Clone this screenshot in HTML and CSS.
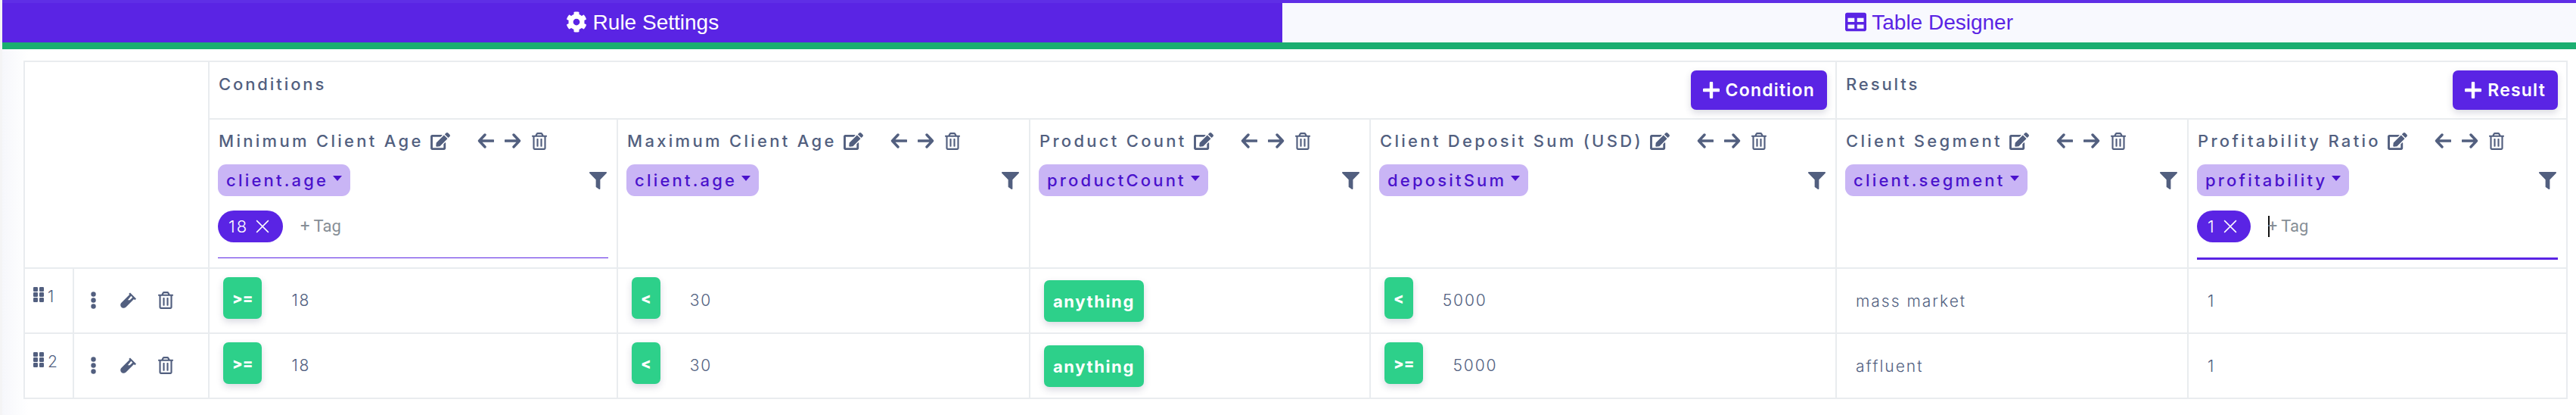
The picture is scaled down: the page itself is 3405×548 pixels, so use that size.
FILE: index.html
```html
<!DOCTYPE html>
<html lang="en">
<head>
  <meta charset="UTF-8" />
  <title>Rule Designer</title>
  <link rel="stylesheet" href="styles.css">
</head>
<body>

<svg class="icon-defs" aria-hidden="true">
  <symbol id="i-cog" viewBox="0 0 512 512"><path d="M487.4 315.7l-42.6-24.6c4.3-23.2 4.3-47 0-70.2l42.6-24.6c4.9-2.8 7.1-8.6 5.5-14-11.1-35.6-30-67.8-54.7-94.6-3.8-4.1-10-5.1-14.8-2.3L380.8 110c-17.9-15.4-38.5-27.3-60.8-35.1V25.8c0-5.6-3.9-10.5-9.4-11.7-36.7-8.2-74.3-7.8-109.2 0-5.5 1.2-9.4 6.1-9.4 11.7V75c-22.2 7.9-42.8 19.8-60.8 35.1L88.7 85.5c-4.9-2.8-11-1.9-14.8 2.3-24.7 26.7-43.6 58.9-54.7 94.6-1.7 5.4.6 11.2 5.5 14L67.3 221c-4.3 23.2-4.3 47 0 70.2l-42.6 24.6c-4.9 2.8-7.1 8.6-5.5 14 11.1 35.6 30 67.8 54.7 94.6 3.8 4.1 10 5.1 14.8 2.3l42.6-24.6c17.9 15.4 38.5 27.3 60.8 35.1v49.2c0 5.6 3.9 10.5 9.4 11.7 36.7 8.2 74.3 7.8 109.2 0 5.5-1.2 9.4-6.1 9.4-11.7v-49.2c22.2-7.9 42.8-19.8 60.8-35.1l42.6 24.6c4.9 2.8 11 1.9 14.8-2.3 24.7-26.7 43.6-58.9 54.7-94.6 1.5-5.5-.7-11.3-5.6-14.1zM256 336c-44.1 0-80-35.9-80-80s35.9-80 80-80 80 35.9 80 80-35.9 80-80 80z"/></symbol>
  <symbol id="i-table" viewBox="0 0 512 512"><path d="M464 32H48C21.49 32 0 53.49 0 80v352c0 26.51 21.49 48 48 48h416c26.51 0 48-21.49 48-48V80c0-26.51-21.49-48-48-48zM224 416H64v-96h160v96zm0-160H64v-96h160v96zm224 160H288v-96h160v96zm0-160H288v-96h160v96z"/></symbol>
  <symbol id="i-edit" viewBox="0 0 576 512"><path d="M402.6 83.2l90.2 90.2c3.8 3.8 3.8 10 0 13.8L274.4 405.6l-92.8 10.3c-12.4 1.4-22.9-9.1-21.5-21.5l10.3-92.8L388.8 83.2c3.8-3.8 10-3.8 13.8 0zm162-22.9l-48.8-48.8c-15.2-15.2-39.9-15.2-55.2 0l-35.4 35.4c-3.8 3.8-3.8 10 0 13.8l90.2 90.2c3.8 3.8 10 3.8 13.8 0l35.4-35.4c15.2-15.3 15.2-40 0-55.2zM384 346.2V448H64V128h229.8c3.2 0 6.2-1.3 8.5-3.5l40-40c7.6-7.6 2.2-20.5-8.5-20.5H48C21.5 64 0 85.5 0 112v352c0 26.5 21.5 48 48 48h352c26.5 0 48-21.5 48-48V306.2c0-10.7-12.9-16-20.5-8.5l-40 40c-2.2 2.3-3.5 5.3-3.5 8.5z"/></symbol>
  <symbol id="i-trash" viewBox="0 0 448 512"><path d="M268 416h24a12 12 0 0 0 12-12V188a12 12 0 0 0-12-12h-24a12 12 0 0 0-12 12v216a12 12 0 0 0 12 12zM432 80h-82.41l-34-56.7A48 48 0 0 0 274.41 0H173.59a48 48 0 0 0-41.16 23.3L98.41 80H16A16 16 0 0 0 0 96v16a16 16 0 0 0 16 16h16v336a48 48 0 0 0 48 48h288a48 48 0 0 0 48-48V128h16a16 16 0 0 0 16-16V96a16 16 0 0 0-16-16zM171.84 50.91A6 6 0 0 1 177 48h94a6 6 0 0 1 5.15 2.91L293.61 80H154.39zM368 464H80V128h288zm-212-48h24a12 12 0 0 0 12-12V188a12 12 0 0 0-12-12h-24a12 12 0 0 0-12 12v216a12 12 0 0 0 12 12z"/></symbol>
  <symbol id="i-filter" viewBox="0 0 512 512"><path d="M487.976 0H24.028C2.71 0-8.047 25.866 7.058 40.971L192 225.941V432c0 7.831 3.821 15.17 10.237 19.662l80 55.98C298.02 518.69 320 507.493 320 487.98V225.941l184.947-184.97C520.021 25.896 509.338 0 487.976 0z"/></symbol>
  <symbol id="i-left" viewBox="0 0 22 20"><path d="M10 2 2.500 10 10 18M3 10h18" fill="none" stroke="currentColor" stroke-width="3.400" stroke-linecap="round" stroke-linejoin="round"/></symbol>
  <symbol id="i-right" viewBox="0 0 22 20"><path d="M12 2 19.500 10 12 18M1 10h18" fill="none" stroke="currentColor" stroke-width="3.400" stroke-linecap="round" stroke-linejoin="round"/></symbol>
  <symbol id="i-plus" viewBox="0 0 20 20"><path d="M10 1.500v17M1.500 10h17" fill="none" stroke="currentColor" stroke-width="4" stroke-linecap="round"/></symbol>
  <symbol id="i-x" viewBox="0 0 16 16"><path d="M1 1l14 14M15 1 1 15" fill="none" stroke="currentColor" stroke-width="1.300"/></symbol>
  <symbol id="i-grip" viewBox="0 0 14 20"><rect width="6" height="6" rx="1.200"/><rect x="8" width="6" height="6" rx="1.200"/><rect y="7" width="6" height="6" rx="1.200"/><rect x="8" y="7" width="6" height="6" rx="1.200"/><rect y="14" width="6" height="6" rx="1.200"/><rect x="8" y="14" width="6" height="6" rx="1.200"/></symbol>
  <symbol id="i-dots" viewBox="0 0 7 23"><circle cx="3.500" cy="3.500" r="3.200"/><circle cx="3.500" cy="11.500" r="3.200"/><circle cx="3.500" cy="19.500" r="3.200"/></symbol>
  <symbol id="i-vial" viewBox="0 0 22 22"><path d="M13 1.500 21 9.500 19.300 11.200 18 10 7.500 20.500C5.500 22.300 2.800 22 1.300 20.500-.2 19 -.2 16.400 1.700 14.500L12.200 4 11.200 3Z"/><path d="M14.300 5.800 16.200 7.700 12.600 11.300 9.900 11.300Z" fill="#fff"/></symbol>
</svg>

<nav class="tabs">
  <button class="tab active"><svg class="tab-icon"><use href="#i-cog"/></svg> Rule Settings</button>
  <button class="tab"><svg class="tab-icon"><use href="#i-table"/></svg> Table Designer</button>
</nav>

<div class="designer">
  <table class="rule-table">
    <colgroup>
      <col class="col-num"><col class="col-actions">
      <col class="col-a"><col class="col-b"><col class="col-c"><col class="col-d"><col class="col-e"><col class="col-f">
    </colgroup>
    <thead>
      <tr class="group-row">
        <th colspan="2" rowspan="2"></th>
        <th colspan="4">
          <div class="group-head">
            <span class="group-title">Conditions</span>
            <button class="add-btn"><svg><use href="#i-plus"/></svg>Condition</button>
          </div>
        </th>
        <th colspan="2">
          <div class="group-head">
            <span class="group-title">Results</span>
            <button class="add-btn"><svg><use href="#i-plus"/></svg>Result</button>
          </div>
        </th>
      </tr>
      <tr class="column-row">
        <th>
          <div class="col-title">Minimum Client Age <svg class="ic-edit"><use href="#i-edit"/></svg>
            <span class="col-tools"><svg class="ic-arrow"><use href="#i-left"/></svg><svg class="ic-arrow"><use href="#i-right"/></svg><svg class="ic-trash"><use href="#i-trash"/></svg></span></div>
          <div class="col-field"><span class="field-pill">client.age<i class="caret"></i></span><svg class="ic-filter"><use href="#i-filter"/></svg></div>
          <div class="tag-input"><span class="tag">18 <svg><use href="#i-x"/></svg></span><span class="tag-hint">+ Tag</span></div>
        </th>
        <th>
          <div class="col-title">Maximum Client Age <svg class="ic-edit"><use href="#i-edit"/></svg>
            <span class="col-tools"><svg class="ic-arrow"><use href="#i-left"/></svg><svg class="ic-arrow"><use href="#i-right"/></svg><svg class="ic-trash"><use href="#i-trash"/></svg></span></div>
          <div class="col-field"><span class="field-pill">client.age<i class="caret"></i></span><svg class="ic-filter"><use href="#i-filter"/></svg></div>
        </th>
        <th>
          <div class="col-title">Product Count <svg class="ic-edit"><use href="#i-edit"/></svg>
            <span class="col-tools"><svg class="ic-arrow"><use href="#i-left"/></svg><svg class="ic-arrow"><use href="#i-right"/></svg><svg class="ic-trash"><use href="#i-trash"/></svg></span></div>
          <div class="col-field"><span class="field-pill">productCount<i class="caret"></i></span><svg class="ic-filter"><use href="#i-filter"/></svg></div>
        </th>
        <th>
          <div class="col-title">Client Deposit Sum (USD) <svg class="ic-edit"><use href="#i-edit"/></svg>
            <span class="col-tools"><svg class="ic-arrow"><use href="#i-left"/></svg><svg class="ic-arrow"><use href="#i-right"/></svg><svg class="ic-trash"><use href="#i-trash"/></svg></span></div>
          <div class="col-field"><span class="field-pill">depositSum<i class="caret"></i></span><svg class="ic-filter"><use href="#i-filter"/></svg></div>
        </th>
        <th>
          <div class="col-title">Client Segment <svg class="ic-edit"><use href="#i-edit"/></svg>
            <span class="col-tools"><svg class="ic-arrow"><use href="#i-left"/></svg><svg class="ic-arrow"><use href="#i-right"/></svg><svg class="ic-trash"><use href="#i-trash"/></svg></span></div>
          <div class="col-field"><span class="field-pill">client.segment<i class="caret"></i></span><svg class="ic-filter"><use href="#i-filter"/></svg></div>
        </th>
        <th>
          <div class="col-title">Profitability Ratio <svg class="ic-edit"><use href="#i-edit"/></svg>
            <span class="col-tools"><svg class="ic-arrow"><use href="#i-left"/></svg><svg class="ic-arrow"><use href="#i-right"/></svg><svg class="ic-trash"><use href="#i-trash"/></svg></span></div>
          <div class="col-field"><span class="field-pill">profitability<i class="caret"></i></span><svg class="ic-filter"><use href="#i-filter"/></svg></div>
          <div class="tag-input focused"><span class="tag">1 <svg><use href="#i-x"/></svg></span><i class="text-caret"></i><span class="tag-hint">+ Tag</span></div>
        </th>
      </tr>
    </thead>
    <tbody>
      <tr>
        <td class="num-cell"><svg class="ic-grip"><use href="#i-grip"/></svg>1</td>
        <td class="actions-cell"><svg class="ic-dots"><use href="#i-dots"/></svg><svg class="ic-vial"><use href="#i-vial"/></svg><svg class="ic-trash big"><use href="#i-trash"/></svg></td>
        <td><div class="cond"><span class="op">&gt;=</span><span class="val">18</span></div></td>
        <td><div class="cond"><span class="op">&lt;</span><span class="val">30</span></div></td>
        <td><div class="cond"><span class="op any">anything</span></div></td>
        <td><div class="cond"><span class="op">&lt;</span><span class="val">5000</span></div></td>
        <td class="plain">mass market</td>
        <td class="plain">1</td>
      </tr>
      <tr>
        <td class="num-cell"><svg class="ic-grip"><use href="#i-grip"/></svg>2</td>
        <td class="actions-cell"><svg class="ic-dots"><use href="#i-dots"/></svg><svg class="ic-vial"><use href="#i-vial"/></svg><svg class="ic-trash big"><use href="#i-trash"/></svg></td>
        <td><div class="cond"><span class="op">&gt;=</span><span class="val">18</span></div></td>
        <td><div class="cond"><span class="op">&lt;</span><span class="val">30</span></div></td>
        <td><div class="cond"><span class="op any">anything</span></div></td>
        <td><div class="cond"><span class="op">&gt;=</span><span class="val">5000</span></div></td>
        <td class="plain">affluent</td>
        <td class="plain">1</td>
      </tr>
    </tbody>
  </table>
</div>

</body>
</html>
```

FILE: styles.css
```css
body {
  display: flex;
  flex-direction: column;
  min-height: 100vh;
  margin: 0;
  background: #f4f4f5;
  color: #525f7f;
  font-family: Inter, "Open Sans", sans-serif;
  overflow: hidden;
}
svg {
  fill: currentColor;
}
.icon-defs {
  display: none;
}

/* tabs */
.tabs {
  display: flex;
  height: 56px;
  margin-left: 3px;
  border-bottom: 9px solid #1bae70;
}
.tab {
  flex: 1;
  border: none;
  border-top: 4px solid #5f2ee6;
  padding: 0;
  background: #f8f9fe;
  color: #5a24e4;
  font-family: "Liberation Sans", Arial, sans-serif;
  font-size: 28px;
}
.tab.active {
  flex: 0 0 1692px;
  background: #5a24e4;
  color: #fff;
}
.tab-icon {
  width: 28px;
  height: 28px;
  vertical-align: -4px;
}

/* table */
.designer {
  flex: 1;
  margin-left: 3px;
  padding: 15px 0 0 28px;
  background: linear-gradient(90deg, #f6f7fb 0, #fff 34px);
}
.rule-table {
  width: 3361px;
  table-layout: fixed;
  border-collapse: collapse;
  background: #fff;
}
.col-num { width: 65px; }
.col-actions { width: 179px; }
.col-a { width: 540px; }
.col-b { width: 545px; }
.col-c { width: 450px; }
.col-d { width: 616px; }
.col-e { width: 465px; }
.col-f { width: 501px; }

.rule-table th,
.rule-table td {
  border: 2px solid #e9ecef;
  padding: 0;
  text-align: left;
  vertical-align: top;
  font-weight: 400;
}
.group-row {
  height: 76px;
}
.column-row {
  height: 197px;
}
.group-head {
  display: flex;
  justify-content: space-between;
  padding: 11px 11px 0 12px;
  height: 63px;
}
.group-title {
  font-size: 22px;
  font-weight: 500;
  letter-spacing: 2.900px;
  line-height: 36px;
}
.add-btn {
  display: flex;
  align-items: center;
  gap: 8px;
  height: 52px;
  border: none;
  border-radius: 7px;
  padding: 0 16px;
  background: #5a24e4;
  color: #fff;
  font-family: Inter, sans-serif;
  font-size: 23px;
  font-weight: 600;
  letter-spacing: 1.200px;
  box-shadow: 0 4px 10px rgba(50, 50, 93, 0.18);
}
.add-btn svg {
  width: 22px;
  height: 22px;
}

/* column header */
.col-title {
  display: flex;
  align-items: center;
  height: 30px;
  margin: 13px 12px 0;
  font-size: 22px;
  font-weight: 500;
  letter-spacing: 3.300px;
  white-space: pre;
}
.ic-edit {
  width: 26px;
  height: 23px;
}
.col-tools {
  display: flex;
  align-items: center;
  gap: 14px;
  margin-left: 36px;
}
.ic-arrow {
  width: 22px;
  height: 20px;
}
.ic-trash {
  width: 20px;
  height: 23px;
}
.col-field {
  display: flex;
  justify-content: space-between;
  align-items: center;
  margin: 16px 13px 0 11px;
}
.field-pill {
  display: flex;
  align-items: center;
  height: 42px;
  padding: 0 11px;
  border-radius: 11px;
  background: #c9b5f5;
  color: #4a12cc;
  font-size: 22px;
  font-weight: 500;
  letter-spacing: 3.200px;
}
.caret {
  width: 0;
  height: 0;
  margin: -6px 0 0 6px;
  border: 6px solid transparent;
  border-top: 7px solid #4a12cc;
  border-bottom: 0;
}
.ic-filter {
  width: 23px;
  height: 23px;
}
.tag-input {
  display: flex;
  align-items: flex-start;
  height: 62px;
  margin: 19px 11px 0;
  border-bottom: 1px solid #5a24e4;
}
.tag-input.focused {
  border-bottom: 3px solid #5a24e4;
}
.tag {
  display: flex;
  align-items: center;
  gap: 10px;
  height: 42px;
  padding: 0 18px 0 14px;
  border-radius: 21px;
  background: #5a24e4;
  color: #fff;
  font-size: 22px;
  font-weight: 300;
  letter-spacing: 2px;
}
.tag svg {
  width: 18px;
  height: 18px;
}
.tag-hint {
  margin-left: 23px;
  color: #868e96;
  font-family: Roboto, sans-serif;
  font-size: 22px;
  line-height: 42px;
}
.text-caret {
  width: 2px;
  height: 28px;
  margin: 7px -25px 0 23px;
  background: #111;
}

/* rows */
.rule-table tbody tr {
  height: 86px;
}
.rule-table .num-cell {
  padding: 24px 0 0 11px;
  font-size: 21px;
  font-weight: 300;
  line-height: 26px;
}
.ic-grip {
  width: 14px;
  height: 20px;
  margin-right: 5px;
}
.rule-table .actions-cell {
  padding: 30px 0 0 22px;
  white-space: nowrap;
}
.actions-cell svg {
  vertical-align: top;
}
.ic-dots {
  width: 7px;
  height: 23px;
}
.ic-vial {
  width: 22px;
  height: 22px;
  margin-left: 32px;
}
.ic-trash.big {
  margin-left: 28px;
}
.cond {
  display: flex;
  gap: 39px;
  padding: 11px 0 0 18px;
}
.op {
  display: flex;
  align-items: center;
  justify-content: center;
  height: 55px;
  padding: 0 12px;
  border-radius: 7px;
  background: #2dd08a;
  color: #fff;
  font-size: 20px;
  font-weight: 800;
  box-shadow: 0 4px 10px rgba(50, 50, 93, 0.18);
}
.op.any {
  margin-top: 4px;
  padding: 0 12px;
  font-size: 22px;
  font-weight: 700;
  letter-spacing: 1.600px;
}
.val {
  align-self: center;
  padding-top: 6px;
  font-size: 21px;
  font-weight: 300;
  letter-spacing: 1.900px;
}
.rule-table td.plain {
  padding: 0 0 0 25px;
  vertical-align: middle;
  font-size: 21px;
  font-weight: 300;
  letter-spacing: 2px;
}
```
